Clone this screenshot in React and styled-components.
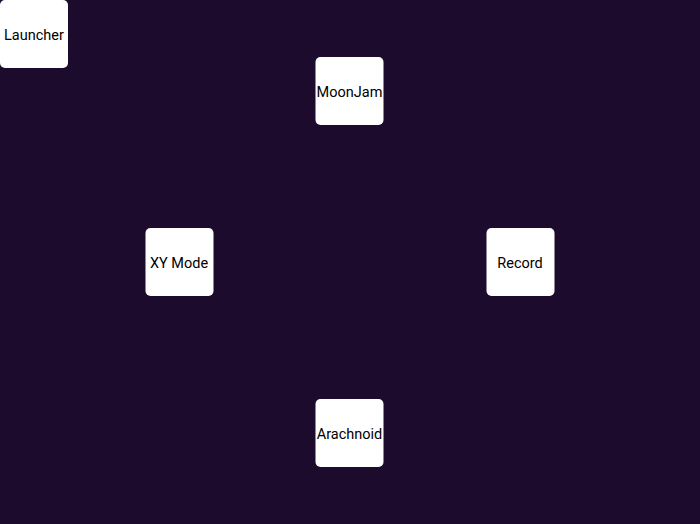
import React from "react"
import styled, { createGlobalStyle } from "styled-components"

const GlobalStyle = createGlobalStyle`
  html, body {
    margin: 0;
    padding: 0;
    background: #1d0b2e;
  }
  * {
    box-sizing: border-box;
  }
`

const Screen = styled.div`
  position: relative;
  width: 100vw;
  height: 100vh;
  background: #1d0b2e;
  display: flex;
  align-items: center;
  justify-content: center;
  font-family: Roboto, "Liberation Sans", sans-serif;
`

const Wheel = styled.div`
  display: grid;
  grid-template-columns: repeat(3, 68px);
  grid-template-rows: repeat(3, 68px);
  column-gap: 102.5px;
  row-gap: 103px;
  transform: translateX(-0.5px);
`

const Tile = styled.button`
  width: 68px;
  height: 68px;
  border: none;
  border-radius: 5px;
  background: #ffffff;
  color: #000000;
  font-family: inherit;
  font-size: 14.5px;
  padding: 2px 0 0;
  display: flex;
  align-items: center;
  justify-content: center;
  white-space: nowrap;
  grid-column: ${p => p.$col};
  grid-row: ${p => p.$row};
`

const LauncherButton = styled(Tile)`
  position: absolute;
  top: 0;
  left: 0;
`

const items = [
  { label: "MoonJam", col: 2, row: 1 },
  { label: "XY Mode", col: 1, row: 2 },
  { label: "Record", col: 3, row: 2 },
  { label: "Arachnoid", col: 2, row: 3 },
]

const App = () => {
  return (
    <>
      <GlobalStyle />
      <Screen>
        <LauncherButton>Launcher</LauncherButton>
        <Wheel>
          {items.map(item => (
            <Tile key={item.label} $col={item.col} $row={item.row}>
              {item.label}
            </Tile>
          ))}
        </Wheel>
      </Screen>
    </>
  )
}

export default App
